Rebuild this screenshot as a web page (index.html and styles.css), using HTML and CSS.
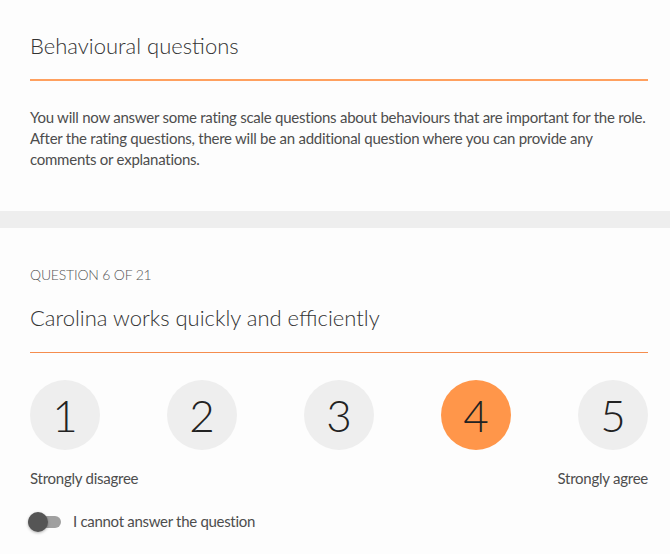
FILE: index.html
```html
<!DOCTYPE html>
<html lang="en">
<head>
    <meta charset="UTF-8">
    <meta name="viewport" content="width=device-width, initial-scale=1.0">
    <title>Behavioural questions</title>
    <link rel="stylesheet" href="styles.css">
</head>
<body>
    <div class="section intro">
        <h1 class="title">Behavioural questions</h1>
        <p class="desc">You will now answer some rating scale questions about behaviours that are important for the role. After the rating questions, there will be an additional question where you can provide any comments or explanations.</p>
    </div>
    <div class="divider"></div>
    <div class="section question">
        <div class="counter">QUESTION 6 OF 21</div>
        <h2 class="q-title">Carolina works quickly and efficiently</h2>
        <div class="scale">
            <span class="opt">1</span>
            <span class="opt">2</span>
            <span class="opt">3</span>
            <span class="opt opt-on">4</span>
            <span class="opt">5</span>
        </div>
        <div class="scale-labels">
            <span>Strongly disagree</span>
            <span>Strongly agree</span>
        </div>
        <label class="skip">
            <span class="switch"><span class="knob"></span></span>
            I cannot answer the question
        </label>
    </div>
</body>
</html>
```

FILE: styles.css
```css
*{
margin:0;
padding:0;
box-sizing:border-box;
}
body{
    background:#fdfdfd;
    color:#3a3a3a;
    font-family:Lato, "Open Sans", "Liberation Sans", sans-serif;
}
.section{
    padding:0 22px 0 30px;
}
.intro{
    padding-top:33px;
    padding-bottom:41px;
}
.title{
    font-size:22px;
    line-height:26px;
    font-weight:300;
    color:#333;
    padding-bottom:20px;
    border-bottom:2px solid #ffa05f;
}
.desc{
    margin-top:26px;
    font-size:15px;
    line-height:21px;
    letter-spacing:-0.25px;
    color:#4d4d4d;
}
.divider{
    height:17px;
    background:#eeeeee;
}
.question{
    padding-top:37px;
    padding-bottom:20px;
}
.counter{
    font-size:14px;
    line-height:20px;
    letter-spacing:-0.2px;
    font-weight:300;
    color:#555;
}
.q-title{
    margin-top:20px;
    font-size:22px;
    line-height:26px;
    font-weight:300;
    color:#333;
    padding-bottom:21px;
    border-bottom:1px solid #f58d4e;
}
.scale{
    display:flex;
    justify-content:space-between;
    margin-top:27px;
}
.opt{
    display:flex;
    align-items:center;
    justify-content:center;
    width:70px;
    height:70px;
    border-radius:50%;
    background:#eeeeee;
    font-size:44px;
    font-weight:300;
    color:#222;
}
.opt-on{
    background:#ff964a;
}
.scale-labels{
    display:flex;
    justify-content:space-between;
    margin-top:18px;
    font-size:15px;
    line-height:21px;
    letter-spacing:-0.25px;
    color:#4d4d4d;
}
.skip{
    display:flex;
    align-items:center;
    margin-top:22px;
    font-size:15px;
    line-height:21px;
    letter-spacing:-0.3px;
    color:#4d4d4d;
}
.switch{
    position:relative;
    width:33px;
    height:12px;
    margin-left:-2px;
    margin-right:12px;
    border-radius:6px;
    background:#a0a0a0;
}
.knob{
    position:absolute;
    left:0;
    top:-4px;
    width:20px;
    height:20px;
    border-radius:50%;
    background:#555;
    box-shadow:0 1px 3px rgba(0,0,0,.3);
}
```
